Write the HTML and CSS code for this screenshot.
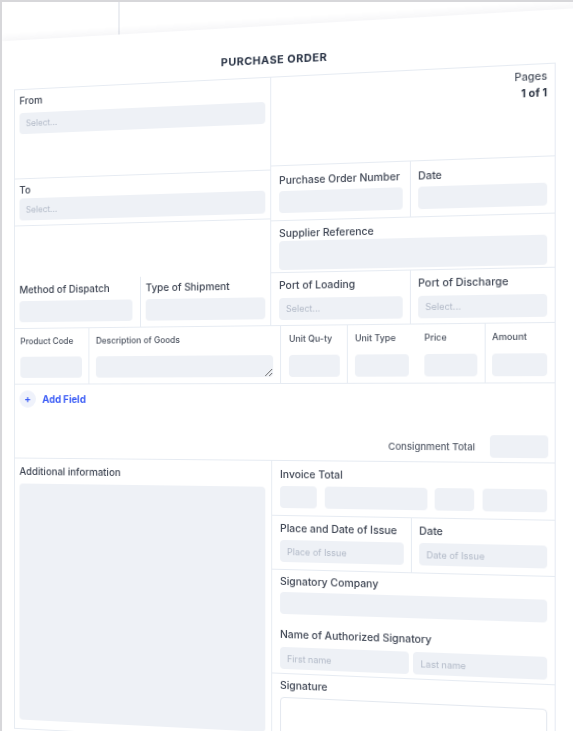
FILE: index.html
```html
<!DOCTYPE html>
<html>
<head>
    <meta charset="UTF-8">
    <title>Purchase Order</title>
    <link rel="stylesheet" href="styles.css">
</head>
<body>
    <div class="screen">
        <div class="sheet">
            <div class="doc">
                <h1 class="doc-title">PURCHASE ORDER</h1>

                <div class="form">
                    <div class="head">
                        <div class="col col-left">
                            <div class="cell cell-from">
                                <label class="label">From</label>
                                <input class="input input-from" placeholder="Select...">
                            </div>
                            <div class="cell cell-to">
                                <label class="label">To</label>
                                <input class="input input-to" placeholder="Select...">
                            </div>
                            <div class="cell cell-dispatch">
                                <div class="split">
                                    <div class="sub sub-first">
                                        <label class="label">Method of Dispatch</label>
                                        <input class="input">
                                    </div>
                                    <div class="sub">
                                        <label class="label">Type of Shipment</label>
                                        <input class="input">
                                    </div>
                                </div>
                            </div>
                        </div>

                        <div class="col col-right">
                            <div class="cell cell-pages">
                                <div class="pages-label">Pages</div>
                                <div class="pages-count">1 of 1</div>
                            </div>
                            <div class="pair pair-po">
                                <div class="sub sub-first">
                                    <label class="label">Purchase Order Number</label>
                                    <input class="input">
                                </div>
                                <div class="sub">
                                    <label class="label">Date</label>
                                    <input class="input">
                                </div>
                            </div>
                            <div class="cell cell-supplier">
                                <label class="label">Supplier Reference</label>
                                <input class="input input-tall">
                            </div>
                            <div class="pair pair-ports">
                                <div class="sub sub-first">
                                    <label class="label">Port of Loading</label>
                                    <input class="input" placeholder="Select...">
                                </div>
                                <div class="sub">
                                    <label class="label">Port of Discharge</label>
                                    <input class="input" placeholder="Select...">
                                </div>
                            </div>
                        </div>
                    </div>

                    <div class="goods">
                        <div class="goods-cell g-code">
                            <label class="label label-small">Product Code</label>
                            <input class="input">
                        </div>
                        <div class="goods-cell g-desc">
                            <label class="label label-small">Description of Goods</label>
                            <textarea class="input input-area"></textarea>
                        </div>
                        <div class="goods-cell g-qty">
                            <label class="label label-small">Unit Qu-ty</label>
                            <input class="input">
                        </div>
                        <div class="goods-cell g-type">
                            <label class="label label-small">Unit Type</label>
                            <input class="input">
                        </div>
                        <div class="goods-cell g-price">
                            <label class="label label-small">Price</label>
                            <input class="input">
                        </div>
                        <div class="goods-cell g-amount">
                            <label class="label label-small">Amount</label>
                            <input class="input">
                        </div>
                    </div>

                    <div class="add-row">
                        <button class="add-btn"><span class="add-icon">+</span>Add Field</button>
                        <div class="consignment">
                            <span class="consignment-label">Consignment Total</span>
                            <input class="input consignment-input">
                        </div>
                    </div>

                    <div class="foot">
                        <div class="cell cell-info">
                            <label class="label">Additional information</label>
                            <textarea class="input info-area"></textarea>
                        </div>
                        <div class="col col-right">
                            <div class="cell cell-invoice">
                                <label class="label">Invoice Total</label>
                                <div class="invoice-fields">
                                    <input class="input">
                                    <input class="input">
                                    <input class="input">
                                    <input class="input">
                                </div>
                            </div>
                            <div class="pair pair-issue">
                                <div class="sub sub-first">
                                    <label class="label">Place and Date of Issue</label>
                                    <input class="input" placeholder="Place of Issue">
                                </div>
                                <div class="sub">
                                    <label class="label">Date</label>
                                    <input class="input" placeholder="Date of Issue">
                                </div>
                            </div>
                            <div class="cell cell-signatory">
                                <label class="label">Signatory Company</label>
                                <input class="input input-company">
                                <label class="label label-name">Name of Authorized Signatory</label>
                                <div class="name-fields">
                                    <input class="input" placeholder="First name">
                                    <input class="input" placeholder="Last name">
                                </div>
                            </div>
                            <div class="cell cell-signature">
                                <label class="label">Signature</label>
                                <div class="signature-box"></div>
                            </div>
                        </div>
                    </div>
                </div>
            </div>
        </div>
    </div>
</body>
</html>
```

FILE: styles.css
```css
* {
    margin: 0;
    padding: 0;
    box-sizing: border-box;
}

body {
    font-family: Inter, "Noto Sans", Arial, sans-serif;
    background: #fff;
}

/* app frame behind the tilted sheet */
.screen {
    height: 731px;
    overflow: hidden;
    border-top: 2px solid #d7d7da;
    border-left: 2px solid #d7d7da;
    background: linear-gradient(#eceef2, #eceef2) 116px 0 / 2px 50px no-repeat, #fff;
}

.sheet {
    width: 600px;
    height: 740px;
    margin: 23px 0 0 -16px;
    padding: 27px 0 0 13px;
    background: #fff;
    box-shadow: 0 -3px 7px rgba(30, 40, 70, 0.05);
    transform-origin: 299px 375px;
    transform: perspective(1000px) rotateY(-8.7deg);
}

.doc {
    width: 549px;
}

.doc-title {
    height: 14px;
    margin-bottom: 9.5px;
    font-size: 11px;
    line-height: 14px;
    font-weight: 700;
    letter-spacing: 0.5px;
    text-align: center;
    color: #283244;
}

.form {
    border: 1px solid #e6ebf2;
    height: 667px;
    display: flex;
    flex-direction: column;
    overflow: hidden;
}

.label {
    display: block;
    font-size: 10.4px;
    line-height: 12px;
    font-weight: 500;
    color: #3e4553;
    white-space: nowrap;
}

.label-small {
    font-size: 8.8px;
    color: #4a515e;
}

.input {
    display: block;
    width: 100%;
    height: 22px;
    border: none;
    border-radius: 4px;
    background: #eef1f6;
    padding: 0 7px;
    font-family: inherit;
    font-size: 9px;
    color: #3e4553;
    outline: none;
}

.input::placeholder {
    color: #b1b9c7;
}

/* header block */
.head {
    display: flex;
    flex-shrink: 0;
    height: 249px;
    border-bottom: 1px solid #e6ebf2;
}

.col {
    display: flex;
    flex-direction: column;
}

.col-left {
    width: 271px;
    border-right: 1px solid #e6ebf2;
}

.col-right {
    flex: 1;
    min-height: 0;
}

.cell {
    flex-shrink: 0;
    border-bottom: 1px solid #e6ebf2;
}

.col-left .cell {
    padding: 0 5px;
}

.col-right .cell {
    padding: 0 7px 0 8px;
}

.cell-from {
    height: 93px;
    padding-top: 6px !important;
}

.cell-from .input {
    margin-top: 6px;
}

.cell-to {
    height: 49px;
    padding-top: 6px !important;
}

.input-to {
    margin-top: 2px;
    height: 23px;
}

.cell-dispatch {
    flex: 1;
    border-bottom: none;
    display: flex;
    flex-direction: column;
    justify-content: flex-end;
    padding: 0 !important;
}

.split,
.pair {
    display: flex;
    flex-shrink: 0;
}

.split {
    height: 51px;
}

.split .sub {
    flex: 1;
    padding: 6px 5px 0 5px;
}

.split .sub-first {
    flex: 0 0 136px;
    padding-right: 8px;
}

.sub-first {
    border-right: 1px solid #e6ebf2;
}

.cell-pages {
    height: 89px;
    padding-top: 6.5px !important;
    text-align: right;
}

.pages-label {
    font-size: 10.4px;
    line-height: 12px;
    font-weight: 500;
    color: #4a515e;
}

.pages-count {
    margin-top: 3.5px;
    font-size: 10.4px;
    line-height: 12px;
    font-weight: 700;
    color: #2c3443;
}

.pair {
    border-bottom: 1px solid #e6ebf2;
}

.pair .sub {
    flex: 1;
    padding: 0 7px;
}

.pair .sub-first {
    flex: 0 0 139px;
    padding-left: 8px;
}

.pair-po {
    height: 55px;
}

.pair-po .sub {
    padding-top: 9px;
}

.pair-po .input {
    margin-top: 4px;
}

.split .input {
    margin-top: 5px;
}

.cell-supplier {
    height: 52.5px;
    padding-top: 7px !important;
}

.input-tall {
    margin-top: 1px;
    height: 29px;
}

.pair-ports {
    flex: 1;
    border-bottom: none;
}

.pair-ports .sub {
    padding-top: 7px;
}

.pair-ports .input {
    margin-top: 5.5px;
    height: 22.5px;
}

/* goods table */
.goods {
    display: grid;
    grid-template-columns: 81px 200px 67px 67px 67px 1fr;
    flex-shrink: 0;
    height: 58px;
    border-bottom: 1px solid #e6ebf2;
}

.goods-cell {
    padding: 7.5px 7px 0 7px;
    border-right: 1px solid #e6ebf2;
}

.goods-cell .input {
    margin-top: 9.5px;
    height: 22.5px;
}

.g-code {
    padding-left: 6px;
}

.g-qty,
.g-price {
    padding-left: 8px;
}

.g-type,
.g-amount {
    border-right: none;
}

.g-amount {
    padding-left: 6px;
}

.input-area {
    resize: vertical;
}

/* add field row */
.add-row {
    flex-shrink: 0;
    height: 77.5px;
    padding: 6.5px 6px 4px 5px;
    border-bottom: 1px solid #e6ebf2;
    display: flex;
    flex-direction: column;
    justify-content: space-between;
}

.add-btn {
    display: flex;
    align-items: center;
    gap: 7px;
    background: none;
    border: none;
    font-family: inherit;
    font-size: 10.3px;
    font-weight: 700;
    color: #3b5cf6;
    cursor: pointer;
    align-self: flex-start;
}

.add-icon {
    width: 18px;
    height: 18px;
    border-radius: 50%;
    background: #eff2fb;
    color: #3b5cf6;
    font-size: 11px;
    line-height: 18px;
    text-align: center;
    font-weight: 600;
}

.consignment {
    display: flex;
    align-items: center;
    justify-content: flex-end;
    gap: 14px;
}

.consignment-label {
    font-size: 9.4px;
    font-weight: 500;
    color: #555c69;
}

.consignment-input {
    width: 55px;
}

/* footer block */
.foot {
    flex: 1;
    min-height: 0;
    display: flex;
}

.cell-info {
    width: 272px;
    border-bottom: none;
    border-right: 1px solid #e6ebf2;
    padding: 7.5px 6px 0 5px !important;
}

.info-area {
    margin-top: 6.5px;
    height: 246px;
    resize: none;
}

.cell-invoice {
    height: 55px;
    padding-top: 7.5px !important;
}

.invoice-fields {
    display: grid;
    grid-template-columns: 37px 101px 38px 1fr;
    gap: 7.5px;
    margin-top: 5.5px;
}

.pair-issue {
    height: 53.5px;
}

.pair-issue .sub {
    padding-top: 7px;
}

.pair-issue .input {
    margin-top: 5px;
}

.cell-signatory {
    height: 104px;
    padding-top: 6px !important;
}

.input-company {
    margin-top: 4.5px;
    height: 21.5px;
}

.label-name {
    margin-top: 15px;
}

.name-fields {
    display: grid;
    grid-template-columns: 1fr 1fr;
    gap: 4.5px;
    margin-top: 6.5px;
}

.cell-signature {
    flex: 1;
    min-height: 0;
    border-bottom: none;
    padding-top: 6.5px !important;
}

.signature-box {
    margin-top: 5px;
    height: 60px;
    border: 1px solid #e3e8ef;
    border-radius: 4px;
    background: #fff;
}
```
